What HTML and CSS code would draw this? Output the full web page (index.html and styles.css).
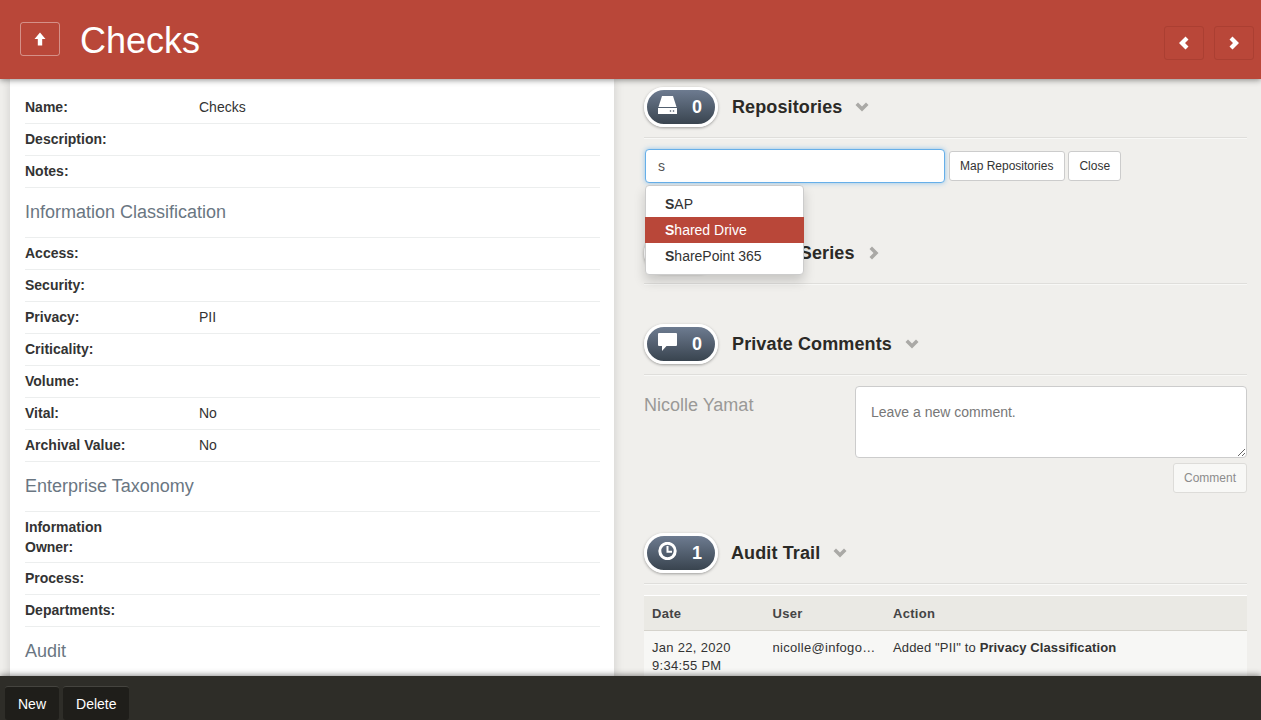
FILE: index.html
```html
<!DOCTYPE html>
<html lang="en">
<head>
<meta charset="utf-8">
<title>Checks</title>
<link rel="stylesheet" href="styles.css">
</head>
<body>
<div class="app">
  <header class="topbar">
    <button class="up-btn"><svg width="12" height="14" viewBox="0 0 12 14"><path d="M6 0.500 11.500 7H8.200V13.500H3.800V7H0.500Z" fill="#fff"/></svg></button>
    <h1 class="page-title">Checks</h1>
    <nav class="pager">
      <button class="pager-btn"><svg width="12" height="14" viewBox="0 0 12 14"><path d="M7.500 0.500 10.500 3.500 7 7 10.500 10.500 7.500 13.500 1 7Z" fill="#fff"/></svg></button>
      <button class="pager-btn"><svg width="12" height="14" viewBox="0 0 12 14"><path d="M4.500 0.500 1.500 3.500 5 7 1.500 10.500 4.500 13.500 11 7Z" fill="#fff"/></svg></button>
    </nav>
  </header>

  <main class="content">
    <section class="details">
      <div class="row"><span class="label">Name:</span><span class="value">Checks</span></div>
      <div class="row"><span class="label">Description:</span></div>
      <div class="row"><span class="label">Notes:</span></div>
      <h2 class="group">Information Classification</h2>
      <div class="row"><span class="label">Access:</span></div>
      <div class="row"><span class="label">Security:</span></div>
      <div class="row"><span class="label">Privacy:</span><span class="value">PII</span></div>
      <div class="row"><span class="label">Criticality:</span></div>
      <div class="row"><span class="label">Volume:</span></div>
      <div class="row"><span class="label">Vital:</span><span class="value">No</span></div>
      <div class="row"><span class="label">Archival Value:</span><span class="value">No</span></div>
      <h2 class="group">Enterprise Taxonomy</h2>
      <div class="row row-tall"><span class="label label-wrap">Information Owner:</span></div>
      <div class="row"><span class="label">Process:</span></div>
      <div class="row"><span class="label">Departments:</span></div>
      <h2 class="group">Audit</h2>
    </section>

    <section class="side">
      <div class="sec-head sec-first">
        <div class="pill"><svg class="pill-icon" width="19" height="18" viewBox="0 0 19 18"><path d="M4 0H15L18.500 11H0.500Z" fill="#fff"/><path d="M0 12H19V18H0Z" fill="#fff"/><circle cx="12.500" cy="15" r="0.800" fill="#465163"/><circle cx="15.500" cy="15" r="0.800" fill="#465163"/></svg><span class="pill-num">0</span></div>
        <h3 class="sec-title">Repositories</h3>
        <svg class="chev" width="14" height="10" viewBox="0 0 14 10"><path d="M0.500 3 3 0.500 7 4.500 11 0.500 13.500 3 7 9.500Z"/></svg>
      </div>
      <div class="map-form">
        <input class="map-input" type="text" value="s">
        <button class="btn btn-map">Map Repositories</button>
        <button class="btn">Close</button>
        <ul class="menu">
          <li class="menu-item"><b>S</b>AP</li>
          <li class="menu-item menu-active"><b>S</b>hared Drive</li>
          <li class="menu-item"><b>S</b>harePoint 365</li>
        </ul>
      </div>

      <div class="sec-head sec-next">
        <div class="pill"><span class="pill-num">0</span></div>
        <h3 class="sec-title">Record Series</h3>
        <svg class="chev chev-right" width="10" height="14" viewBox="0 0 10 14"><path d="M3 0.500 0.500 3 4.500 7 0.500 11 3 13.500 9.500 7Z"/></svg>
      </div>

      <div class="sec-head">
        <div class="pill"><svg class="pill-icon" width="19" height="18" viewBox="0 0 19 18"><path d="M1 0H18a1 1 0 0 1 1 1V12a1 1 0 0 1-1 1H8.500L4 18V13H1a1 1 0 0 1-1-1V1a1 1 0 0 1 1-1Z" fill="#fff"/></svg><span class="pill-num">0</span></div>
        <h3 class="sec-title">Private Comments</h3>
        <svg class="chev" width="14" height="10" viewBox="0 0 14 10"><path d="M0.500 3 3 0.500 7 4.500 11 0.500 13.500 3 7 9.500Z"/></svg>
      </div>
      <div class="comment-form">
        <div class="author">Nicolle Yamat</div>
        <div class="comment-box">
          <textarea class="comment-input" placeholder="Leave a new comment."></textarea>
          <button class="btn btn-disabled">Comment</button>
        </div>
      </div>

      <div class="sec-head sec-audit">
        <div class="pill"><svg class="pill-icon" width="19" height="18" viewBox="0 0 19 18"><circle cx="9.500" cy="9" r="7.700" fill="none" stroke="#fff" stroke-width="3"/><path d="M9.500 4V9.700H14" fill="none" stroke="#fff" stroke-width="2"/></svg><span class="pill-num">1</span></div>
        <h3 class="sec-title">Audit Trail</h3>
        <svg class="chev" width="14" height="10" viewBox="0 0 14 10"><path d="M0.500 3 3 0.500 7 4.500 11 0.500 13.500 3 7 9.500Z"/></svg>
      </div>
      <table class="audit">
        <thead>
          <tr><th class="col-date">Date</th><th class="col-user">User</th><th>Action</th></tr>
        </thead>
        <tbody>
          <tr>
            <td>Jan 22, 2020<br>9:34:55 PM</td>
            <td><div class="ellipsis">nicolle@infogovernance.com</div></td>
            <td class="action-cell">Added "PII" to <b class="strong">Privacy Classification</b></td>
          </tr>
        </tbody>
      </table>
    </section>
  </main>

  <footer class="bottombar">
    <button class="foot-btn">New</button>
    <button class="foot-btn">Delete</button>
  </footer>
</div>
</body>
</html>
```

FILE: styles.css
```css
* { box-sizing: border-box; }
html, body { margin: 0; height: 100%; overflow: hidden; }
body { font-family: "Liberation Sans", Arial, sans-serif; font-size: 14px; color: #333; background: #f0efec; }
button { font-family: inherit; }

.app { display: flex; flex-direction: column; height: 720px; }

.topbar { position: relative; z-index: 3; flex: none; height: 79px; background: #b94739; display: flex; align-items: center; padding: 0 7px 0 20px; box-shadow: 0 1px 6px rgba(0,0,0,.45); }
.up-btn { width: 40px; height: 34px; margin-top: -1px; padding: 0 0 1px; border: 1px solid rgba(255,255,255,.4); border-radius: 3px; background: transparent; display: flex; align-items: center; justify-content: center; }
.page-title { margin: 2px 0 0 20px; font-size: 36px; font-weight: 400; color: #fff; line-height: 40px; }
.pager { margin-left: auto; display: flex; gap: 10px; margin-top: 7px; }
.pager-btn { width: 40px; height: 34px; padding: 0; border: 1px solid #ab3f32; border-radius: 3px; background: transparent; display: flex; align-items: center; justify-content: center; }

.content { flex: 1; min-height: 0; overflow: hidden; display: flex; align-items: flex-start; }

.details { flex: none; width: 604px; height: 600px; margin-left: 10px; padding: 13px 14px 0 15px; background: #fff; box-shadow: 0 0 10px rgba(0,0,0,.15); }
.row { display: flex; height: 32px; align-items: center; border-bottom: 1px solid #eceeee; padding-bottom: 1px; }
.row-tall { height: 51px; }
.label { flex: none; width: 174px; font-weight: 700; color: #333; }
.label-wrap { width: 100px; line-height: 20px; }
.value { color: #333; }
.group { margin: 0; height: 50px; padding-top: 14px; font-size: 18px; line-height: 20px; font-weight: 400; color: #6a7682; border-bottom: 1px solid #eceeee; }

.side { flex: none; width: 603px; margin-left: 30px; }
.sec-head { display: flex; align-items: center; height: 51px; margin-top: 40px; border-bottom: 1px solid #dfdedb; box-shadow: 0 1px 0 #f8f8f6; padding-bottom: 10px; }
.sec-first { margin-top: 8px; }
.sec-next { margin-top: 50px; }
.pill { flex: none; width: 74px; height: 40px; border: 3px solid #fff; border-radius: 20px; background: linear-gradient(#6d7b90, #39444f); box-shadow: 0 1px 3px rgba(0,0,0,.35); display: flex; align-items: center; padding-left: 11px; }
.pill-icon { flex: none; margin-top: -5px; }
.pill-num { margin-left: auto; margin-right: 13px; font-size: 18px; font-weight: 700; color: #fff; }
.sec-title { margin: 0 0 0 14px; font-size: 18px; font-weight: 700; color: #2b2a26; letter-spacing: .12px; line-height: 20px; }
.sec-audit .sec-title { margin-left: 13px; }
.chev { margin-left: 13px; fill: #aaa9a6; }
.chev-right { margin-left: 14px; }

.map-form { position: relative; display: flex; align-items: center; gap: 3px; height: 34px; margin: 11px 0 0 1px; }
.map-input { width: 300px; height: 34px; margin-right: 1px; padding: 0 12px; border: 1px solid #66afe9; border-radius: 4px; background: #fff; font: 14px "Liberation Sans", Arial, sans-serif; color: #555; outline: 0; box-shadow: 0 0 5px rgba(102,175,233,.7); }
.btn { height: 30px; padding: 0 10px; border: 1px solid #ccc; border-radius: 3px; background: #fff; font-size: 12px; color: #333; }
.btn-map { padding-right: 11px; }
.menu { position: absolute; z-index: 2; left: 0; top: 36px; width: 159px; height: 90px; margin: 0; padding: 5px 0 0; list-style: none; background: #fff; border: 1px solid #ccc; border-radius: 4px; box-shadow: 0 6px 12px rgba(0,0,0,.175); }
.menu-item { height: 26px; line-height: 26px; margin: 0 -1px; padding-left: 20px; color: #333; }
.menu-active { background: #b94739; color: #fff; }

.comment-form { display: flex; margin-top: 11px; }
.author { flex: none; width: 211px; padding-top: 8px; font-size: 18px; line-height: 22px; color: #9a9997; }
.comment-box { flex: 1; display: flex; flex-direction: column; align-items: flex-end; }
.comment-input { display: block; width: 100%; height: 72px; padding: 17px 15px 0; border: 1px solid #ccc; border-radius: 4px; background: #fff; font: 14px "Liberation Sans", Arial, sans-serif; color: #555; }
.comment-input::placeholder { color: #777; opacity: 1; }
.btn-disabled { margin-top: 5px; width: 74px; padding: 0; border-color: #dddcd9; background: #f8f8f6; color: #8c8c8c; }

.audit { width: 603px; margin-top: 11px; border-collapse: collapse; table-layout: fixed; border-top: 1px solid #fff; font-size: 13px; }
.audit th { height: 35px; padding: 0 8px; text-align: left; font-weight: 700; color: #444; background: #eae9e4; border-bottom: 1px solid #d5d3cc; letter-spacing: .3px; }
.audit td { padding: 8px 8px; vertical-align: top; line-height: 18px; background: #f7f7f5; color: #333; letter-spacing: .3px; }
.audit .action-cell { letter-spacing: .15px; }
.strong { letter-spacing: .1px; }
.col-date, .col-user { width: 120.5px; }
.ellipsis { overflow: hidden; white-space: nowrap; text-overflow: ellipsis; }

.bottombar { position: relative; z-index: 3; flex: none; height: 44px; background: #2e2d28; display: flex; align-items: flex-end; gap: 4px; padding-left: 5px; box-shadow: 0 -1px 6px rgba(0,0,0,.45); }
.foot-btn { height: 34px; padding: 0 13px; border: 0; border-top: 1px solid #45443f; border-radius: 3px; background: #1f1e1a; color: #fff; font-size: 14px; }
```
